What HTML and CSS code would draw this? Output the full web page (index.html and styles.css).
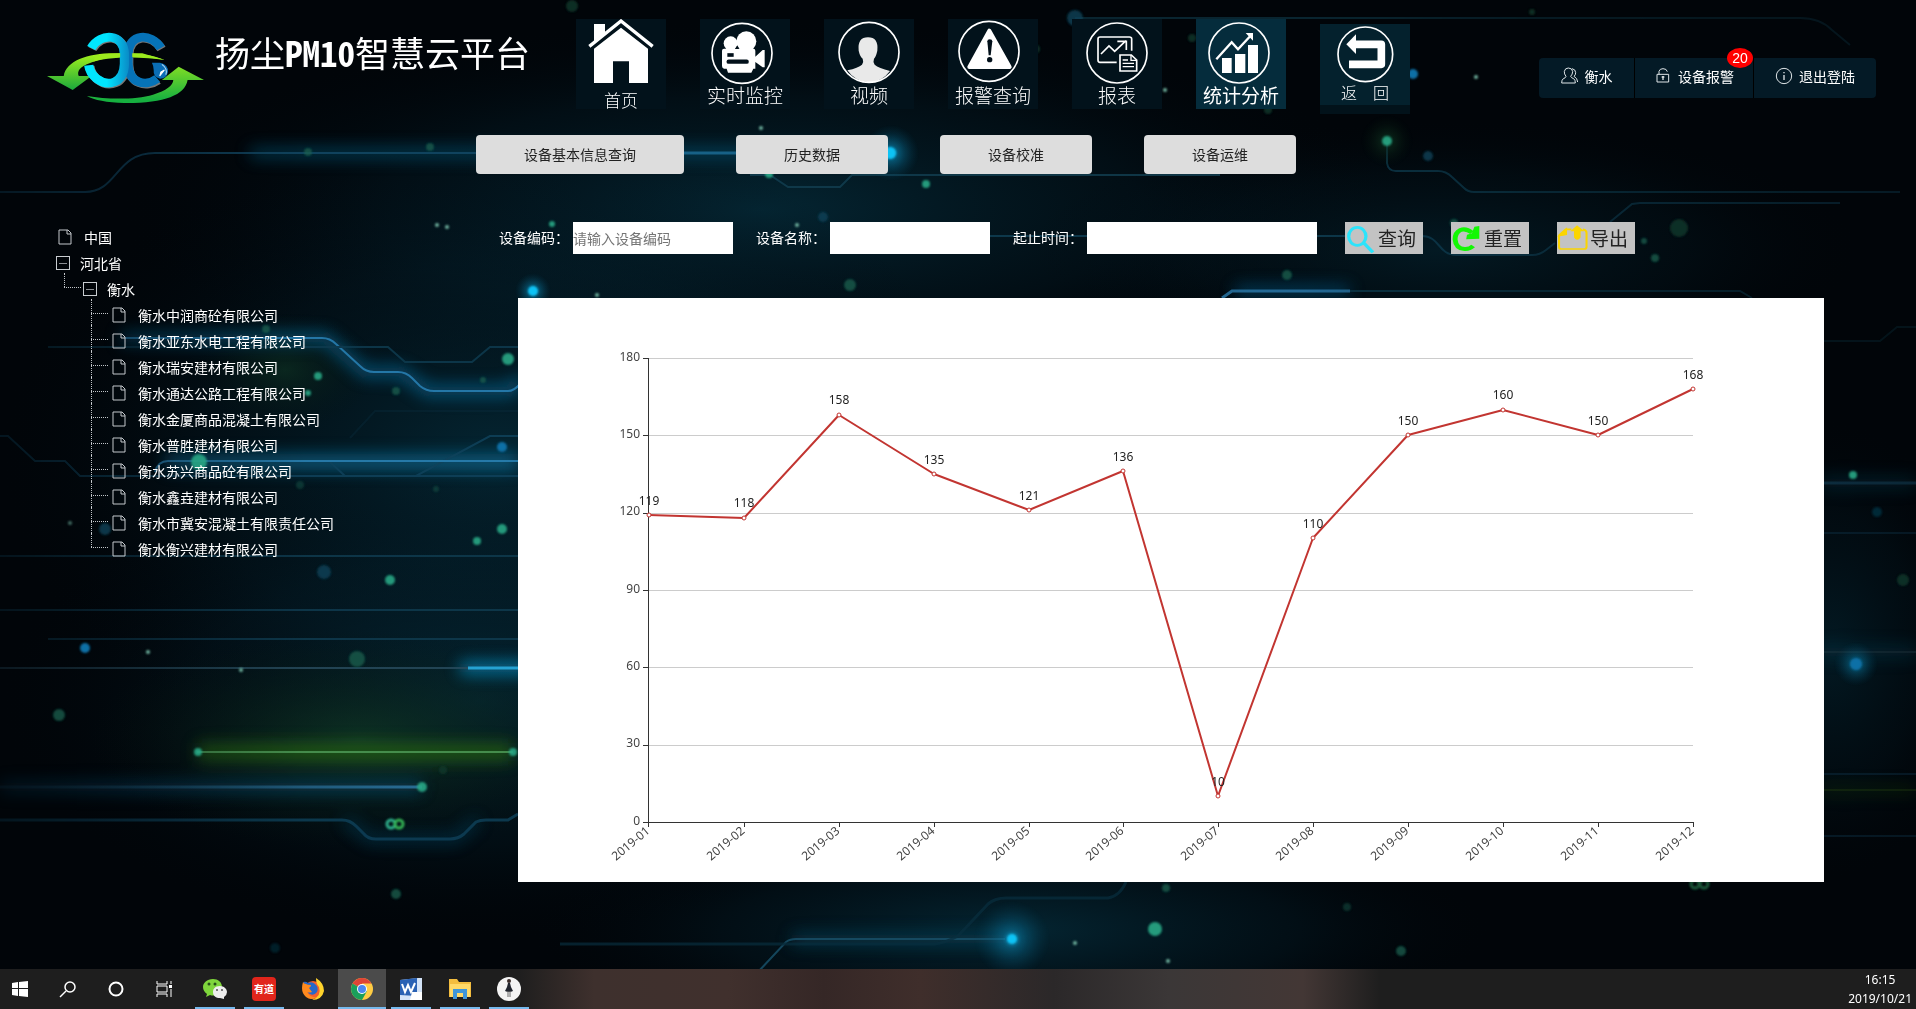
FILE: index.html
```html
<!DOCTYPE html>
<html lang="zh-CN">
<head>
<meta charset="utf-8">
<meta name="viewport" content="width=device-width, initial-scale=1">
<title>扬尘PM10智慧云平台</title>
<link rel="stylesheet" href="styles.css">
</head>
<body>
<svg class="backdrop" viewBox="0 0 1916 1009" preserveAspectRatio="xMidYMid slice" aria-hidden="true">
  <defs>
    <filter id="soft" x="-60" y="-60" width="2040" height="1130" filterUnits="userSpaceOnUse"><feGaussianBlur stdDeviation="8"/></filter>
    <filter id="dotsoft" x="0" y="0" width="1916" height="1009" filterUnits="userSpaceOnUse"><feGaussianBlur stdDeviation="1"/></filter>
    <radialGradient id="teal"><stop offset="0" stop-color="#06384a" stop-opacity=".8"/><stop offset=".6" stop-color="#04222f" stop-opacity=".4"/><stop offset="1" stop-color="#01060c" stop-opacity="0"/></radialGradient>
    <radialGradient id="moss"><stop offset="0" stop-color="#123d25" stop-opacity=".7"/><stop offset="1" stop-color="#06140e" stop-opacity="0"/></radialGradient>
    <radialGradient id="halo"><stop offset="0" stop-color="#12b4e6"/><stop offset=".25" stop-color="#0b7fa9" stop-opacity=".6"/><stop offset="1" stop-color="#05425a" stop-opacity="0"/></radialGradient>
    <linearGradient id="fadeL" gradientUnits="userSpaceOnUse" x1="0" y1="0" x2="518" y2="0"><stop offset="0" stop-color="#12445c" stop-opacity=".6"/><stop offset="1" stop-color="#3a8cc0"/></linearGradient>
    <linearGradient id="edge" gradientUnits="userSpaceOnUse" x1="0" y1="0" x2="1916" y2="0"><stop offset="0" stop-color="#555"/><stop offset=".16" stop-color="#fff"/><stop offset=".68" stop-color="#fff"/><stop offset=".8" stop-color="#aaa"/><stop offset="1" stop-color="#777"/></linearGradient>
    <mask id="edges" maskUnits="userSpaceOnUse" x="0" y="0" width="1916" height="1009"><rect width="1916" height="1009" fill="url(#edge)"/></mask>
  </defs>
  <rect width="1916" height="1009" fill="#010509"/>
  <ellipse cx="760" cy="210" rx="640" ry="190" fill="url(#teal)" opacity=".8"/>
  <ellipse cx="500" cy="460" rx="500" ry="330" fill="url(#teal)" opacity=".8"/>
  <ellipse cx="480" cy="700" rx="480" ry="240" fill="url(#teal)" opacity=".7"/>
  <ellipse cx="1010" cy="930" rx="480" ry="110" fill="url(#teal)" opacity=".8"/>
  <ellipse cx="1440" cy="250" rx="420" ry="130" fill="url(#teal)" opacity=".5"/>
  <ellipse cx="1830" cy="650" rx="150" ry="230" fill="url(#teal)" opacity=".5"/>
  <ellipse cx="360" cy="740" rx="270" ry="110" fill="url(#moss)"/>
  <ellipse cx="285" cy="370" rx="90" ry="60" fill="url(#moss)" opacity=".7"/>
  <g mask="url(#edges)">
  <g class="trace-glow" filter="url(#soft)">
    <path d="M250 153H890" stroke="#0b5878" stroke-width="10"/>
    <path d="M120 338H325L365 372H400L428 391H508L522 380" stroke="#0b6a98" stroke-width="12"/>
    <path d="M165 462H518" stroke="#0b6f9c" stroke-width="16"/>
    <path d="M460 668H530" stroke="#0aa0da" stroke-width="12"/>
    <path d="M197 752H513" stroke="#2b6a18" stroke-width="18"/>
    <path d="M0 787H422" stroke="#0a4a6c" stroke-width="12"/>
    <path d="M345 820L370 839H455L478 820" stroke="#0a4560" stroke-width="8"/>
    <path d="M1235 291H1350" stroke="#0a5a86" stroke-width="10"/>
    <path d="M792 939H1012" stroke="#07435a" stroke-width="12"/>
    <path d="M1820 483H1916M1820 652H1916" stroke="#0a4a62" stroke-width="12"/>
    <path d="M1820 790H1916" stroke="#1d4a10" stroke-width="8"/>
  </g>
  <g class="trace">
    <path d="M0 192H85C118 192 115 153 155 153H885" stroke="#134a66" stroke-width="2"/>
    <path d="M684 153H885" stroke="#1c6c94" stroke-width="3"/>
    <path d="M1075 18H1800Q1820 18 1832 30L1850 45" stroke="#0b2c38" stroke-width="2"/>
    <path d="M1387 141V163Q1388 171 1396 171H1438Q1446 171 1452 177L1464 188Q1468 192 1474 192H1900" stroke="#0f3d50" stroke-width="2"/>
    <path d="M890 236H1422C1440 236 1438 255 1456 255H1532Q1540 255 1546 250L1555 243M1610 222L1632 204L1640 203H1840" stroke="#103f54" stroke-width="2"/>
    <path d="M1222 298L1232 291H1350" stroke="#2a77a6" stroke-width="3"/>
    <path d="M1350 291H1740L1752 298" stroke="#0e3a4c" stroke-width="2"/>
    <path d="M750 175H770L788 187H840L852 175H1220" stroke="#123e50" stroke-width="2"/>
    <path d="M125 338H322Q330 338 336 344L360 366Q366 372 374 372H398Q406 372 412 378L420 386Q426 391 434 391H508Q514 391 520 384" stroke="#2a83b8" stroke-width="2"/>
    <path d="M48 347H388L405 362H472L490 347H518" stroke="#0f3c50" stroke-width="2"/>
    <path d="M0 436H8L35 461H65L80 476H518M300 476H416L490 436H518M330 462L345 476" stroke="#10435c" stroke-width="2"/>
    <path d="M155 472Q158 461 168 461H518" stroke="#2c83b6" stroke-width="2"/>
    <path d="M350 438L375 411H518" stroke="#0a2c3b" stroke-width="2" opacity=".5"/>
    <path d="M0 556H518M0 610H518M48 639H518" stroke="#103c50" stroke-width="2"/>
    <path d="M0 668H518" stroke="#294c5e" stroke-width="2"/>
    <path d="M468 668H518" stroke="#2bb2e6" stroke-width="3"/>
    <path d="M197 752H513" stroke="#4f9a55" stroke-width="2"/>
    <path d="M0 787H422" stroke="url(#fadeL)" stroke-width="3"/>
    <path d="M0 820H342Q350 820 356 826L364 834Q368 839 376 839H450Q458 839 464 834L476 822Q480 820 486 820H508L518 814" stroke="#0f4058" stroke-width="3"/>
    <path d="M758 972L786 942Q790 939 796 939H1005" stroke="#185068" stroke-width="2"/>
    <path d="M560 944H935Q945 943 958 936L988 904Q995 898 1006 898H1108Q1120 896 1126 882" stroke="#0a3040" stroke-width="3" opacity=".8"/>
    <path d="M1820 341H1880L1897 327H1916" stroke="#0a2a35" stroke-width="2"/>
    <path d="M1820 483H1916" stroke="#1c5878" stroke-width="3"/>
    <path d="M1820 533H1916M1820 774H1916M1820 836H1916" stroke="#0f3348" stroke-width="2"/>
    <path d="M1820 652H1916" stroke="#24414f" stroke-width="2"/>
    <path d="M1820 790H1916" stroke="#24420f" stroke-width="2"/>
  </g>
  </g>
  <circle cx="891" cy="153" r="28" fill="url(#halo)"/>
  <circle cx="1012" cy="939" r="38" fill="url(#halo)" opacity=".8"/>
  <circle cx="533" cy="291" r="18" fill="url(#halo)"/>
  <circle cx="1856" cy="664" r="22" fill="url(#halo)" opacity=".8"/>
  <circle cx="1387" cy="141" r="26" fill="url(#moss)"/>
  <g filter="url(#dotsoft)">
    <g fill="#0ec3f5"><circle cx="890" cy="153" r="6"/><circle cx="1012" cy="939" r="5"/><circle cx="533" cy="291" r="5"/></g>
    <g fill="#0f6fa6"><circle cx="1413" cy="74" r="5"/><circle cx="1856" cy="664" r="6"/><circle cx="85" cy="648" r="5"/><circle cx="502" cy="447" r="5"/></g>
    <g fill="#0b4358" opacity=".8"><circle cx="1075" cy="18" r="8"/><circle cx="324" cy="572" r="7"/><circle cx="105" cy="529" r="6"/><circle cx="823" cy="217" r="5"/><circle cx="1428" cy="156" r="5"/><circle cx="1877" cy="512" r="5" opacity=".7"/><circle cx="275" cy="948" r="5" opacity=".5"/></g>
    <g fill="#27a886" opacity=".9"><circle cx="199" cy="462" r="8"/><circle cx="508" cy="359" r="6"/><circle cx="502" cy="529" r="5"/><circle cx="477" cy="541" r="4"/><circle cx="390" cy="580" r="5"/><circle cx="318" cy="376" r="4"/><circle cx="308" cy="393" r="3"/><circle cx="422" cy="787" r="5"/><circle cx="513" cy="752" r="4"/><circle cx="198" cy="752" r="4"/><circle cx="1387" cy="141" r="5"/><circle cx="926" cy="184" r="4"/><circle cx="552" cy="224" r="3"/><circle cx="769" cy="174" r="4"/><circle cx="1155" cy="929" r="7"/><circle cx="1853" cy="475" r="4"/></g>
    <g fill="#176150" opacity=".75"><circle cx="357" cy="659" r="8"/><circle cx="59" cy="715" r="6"/><circle cx="396" cy="894" r="5"/><circle cx="396" cy="391" r="4"/><circle cx="483" cy="380" r="3"/><circle cx="266" cy="329" r="4"/><circle cx="300" cy="485" r="4" opacity=".6"/><circle cx="436" cy="489" r="3" opacity=".6"/><circle cx="850" cy="285" r="6"/><circle cx="1287" cy="275" r="5"/><circle cx="1454" cy="223" r="4"/><circle cx="308" cy="152" r="4"/><circle cx="430" cy="147" r="4"/><circle cx="1401" cy="951" r="5"/><circle cx="1347" cy="907" r="4" opacity=".6"/><circle cx="1166" cy="888" r="4"/><circle cx="1655" cy="258" r="4"/><circle cx="1644" cy="241" r="3"/></g>
    <g fill="#12382a" opacity=".8"><circle cx="1679" cy="228" r="9"/><circle cx="1903" cy="580" r="6"/><circle cx="1192" cy="38" r="4"/><circle cx="1036" cy="49" r="4"/><circle cx="1268" cy="110" r="4"/><circle cx="443" cy="770" r="4"/><circle cx="572" cy="6" r="6"/><circle cx="1532" cy="12" r="3"/></g>
    <g fill="#6fb3a0"><circle cx="437" cy="225" r="2"/><circle cx="447" cy="227" r="2"/><circle cx="761" cy="128" r="2"/><circle cx="797" cy="225" r="2"/><circle cx="1476" cy="77" r="2"/><circle cx="148" cy="652" r="2"/><circle cx="241" cy="670" r="2"/><circle cx="70" cy="523" r="2" opacity=".6"/><circle cx="1075" cy="943" r="2"/><circle cx="1168" cy="961" r="2"/><circle cx="597" cy="295" r="2"/><circle cx="1165" cy="90" r="2"/></g>
    <g fill="none" stroke="#2fb08c" stroke-width="3"><circle cx="391" cy="824" r="4"/><circle cx="399" cy="824" r="4" stroke="#35b455"/></g>
    <g fill="none" stroke="#1c5a3a" stroke-width="3"><circle cx="1695" cy="884" r="4"/><circle cx="1704" cy="884" r="4"/></g>
  </g>
</svg>

<header class="topbar">
  <svg class="logo" viewBox="133 96 440 216" preserveAspectRatio="none" aria-label="logo">
    <defs>
      <linearGradient id="gl" x1="0" y1="0" x2="0" y2="1"><stop offset="0" stop-color="#a4f21c"/><stop offset="1" stop-color="#1aa83c"/></linearGradient>
      <linearGradient id="gr" gradientUnits="userSpaceOnUse" x1="0" y1="200" x2="0" y2="300"><stop offset="0" stop-color="#7fdc25"/><stop offset="1" stop-color="#16b040"/></linearGradient>
      <linearGradient id="cy" gradientUnits="userSpaceOnUse" x1="300" y1="0" x2="366" y2="0"><stop offset="0" stop-color="#00e6ff"/><stop offset="1" stop-color="#0a86c4"/></linearGradient>
    </defs>
    <path d="M133 228H180C186 182 250 158 330 160C390 160 430 165 462 180C400 170 300 168 252 190C226 200 216 214 222 228H258L205 270Z" fill="url(#gl)"/>
    <g fill="none" stroke-width="26">
      <path d="M257 144C284 96 348 100 350 162V192C348 250 304 262 272 236C258 224 252 212 250 196" stroke="#777" transform="translate(3 3)"/>
      <path d="M452 144C424 96 362 100 360 162V192C362 250 410 262 442 238" stroke="#777" transform="translate(2 3)"/>
      <path d="M452 144C424 96 362 100 360 162V192C362 250 410 262 442 236" stroke="#0673b8"/>
      <path d="M257 144C284 96 348 100 350 162V192C348 250 304 262 272 236C258 224 252 212 250 196" stroke="url(#cy)"/>
    </g>
    <path d="M372 160H400L462 179Q420 170 372 171ZM270 167Q300 161 338 160V171Q300 172 262 185Z" fill="#9cea1e"/>
    <path d="M245 288C300 298 380 300 430 284C468 272 486 256 487 240H455L502 200L573 240H527C520 286 460 310 350 309C300 308 265 300 245 288Z" fill="url(#gr)"/>
    <path d="M427 188H450Q474 194 472 216Q468 236 450 236Q430 232 432 210Q432 198 427 188Z" fill="#0a6db5"/>
    <path d="M455 193Q472 206 466 224" fill="none" stroke="#b7dcf2" stroke-width="3"/>
    <path d="M462 210L449 228L452 216Z" fill="#fff" stroke="#fff" stroke-width="3"/>
  </svg>
  <h1 class="brand">扬尘<span class="brand-latin">PM10</span>智慧云平台</h1>
  <nav class="main-nav" aria-label="主导航">
    <a class="tile tile-home" href="#">
      <svg viewBox="48 57 270 198" aria-hidden="true"><path d="M102 249V146L183 83L264 146V249H207V184H159V249Z" fill="#fff"/><path d="M102 124V72H135V98Z" fill="#fff"/><path d="M88 139L183 63L278 139" fill="none" stroke="#fff" stroke-width="10"/></svg>
      <span>首页</span></a>
    <a class="tile" href="#">
      <svg viewBox="420 57 270 198" aria-hidden="true"><circle cx="546" cy="160" r="90" fill="none" stroke="#fff" stroke-width="5"/><g fill="#fff"><circle cx="512" cy="130" r="21"/><circle cx="559" cy="124" r="30"/><path d="M492 146H580Q586 146 586 152V170L608 150H614V202H608L586 186V206H580L574 218H504L500 206H492Q486 204 486 198V152Q486 146 492 146Z"/></g><path d="M502 165H521" stroke="#02101a" stroke-width="11"/><path d="M506 185H560" stroke="#02101a" stroke-width="13" stroke-linecap="round"/><path d="M531 137L537 147H525Z" fill="#02101a"/></svg>
      <span>实时监控</span></a>
    <a class="tile" href="#">
      <svg viewBox="792 57 270 198" aria-hidden="true"><path d="M862 211Q895 204 906 194Q912 186 908 176Q900 170 896 152Q892 112 924 112Q956 112 952 152Q948 170 942 176Q938 186 944 194Q956 204 990 213Q965 247 927 247Q886 246 862 211Z" fill="#e9e9e9"/><circle cx="927" cy="157" r="90" fill="none" stroke="#fff" stroke-width="5"/></svg>
      <span>视频</span></a>
    <a class="tile" href="#">
      <svg viewBox="1164 57 270 198" aria-hidden="true"><circle cx="1287" cy="154" r="90" fill="none" stroke="#fff" stroke-width="5"/><path d="M1288 92L1349 201H1228Z" fill="#fff" stroke="#fff" stroke-width="12" stroke-linejoin="round"/><path d="M1282 124Q1282 118 1289 118Q1297 118 1297 124L1292 166H1286Z" fill="#02101a"/><circle cx="1289" cy="179" r="8" fill="#02101a"/></svg>
      <span>报警查询</span></a>
    <a class="tile" href="#">
      <svg viewBox="216 57 270 198" aria-hidden="true"><g fill="none" stroke="#fff" stroke-width="5"><circle cx="351" cy="159" r="90"/><path d="M350 187H300Q294 187 294 181V117Q294 111 300 111H388Q395 111 395 117V152"/><path d="M303 162L327 138L344 154L378 122M352 124H379V150"/><path d="M360 165H394L410 180V213H360Z"/><path d="M393 165V181H410M368 180H384M368 190H402M368 200H402" stroke-width="4"/></g></svg>
      <span>报表</span></a>
    <a class="tile tile-active" href="#" aria-current="page">
      <svg viewBox="585 57 270 198" aria-hidden="true"><circle cx="714" cy="159" r="90" fill="none" stroke="#fff" stroke-width="5"/><g fill="#fff"><path d="M663 174H692V219H663ZM702 162H733V219H702ZM741 135H771V219H741Z"/><path d="M734 99H756V122Z"/></g><path d="M646 178L692 127L711 148L748 108" fill="none" stroke="#fff" stroke-width="7"/></svg>
      <span>统计分析</span></a>
    <a class="tile tile-back" href="#">
      <svg viewBox="957 72 270 198" aria-hidden="true"><circle cx="1093" cy="163" r="82" fill="none" stroke="#fff" stroke-width="5"/><path d="M1056 133H1141V193H1044" fill="none" stroke="#fff" stroke-width="23" stroke-linejoin="round"/><path d="M1036 133L1065 103V162Z" fill="#fff"/></svg>
      <span>返　回</span></a>
  </nav>
  <nav class="user-bar" aria-label="账户">
    <a class="user-item user-name" href="#"><svg viewBox="325 203 54 54" aria-hidden="true"><path d="M340 231Q334 224 335 216Q337 206 347 206Q358 206 360 216Q360 225 354 231Q356 236 363 238Q368 241 368 251H327Q327 241 332 238Q339 236 340 231ZM358 208Q369 210 369 220Q369 227 364 231Q374 236 375 248"/></svg>衡水</a>
    <a class="user-item user-alarm" href="#"><svg viewBox="609 203 54 54" aria-hidden="true"><path d="M618 225H653V248H618ZM624 225V216Q626 208 636 208Q647 208 649 217"/><path d="M636 230V242M632 233H640" stroke-width="4"/></svg>设备报警<span class="badge">20</span></a>
    <a class="user-item user-exit" href="#"><svg viewBox="978 201 54 54" aria-hidden="true"><circle cx="1005" cy="228" r="23"/><path d="M1005 225V240M1005 216V220" stroke-width="4"/></svg>退出登陆</a>
  </nav>
</header>

<div class="tabs">
  <button class="tab tab-wide" type="button">设备基本信息查询</button>
  <button class="tab" type="button">历史数据</button>
  <button class="tab" type="button">设备校准</button>
  <button class="tab" type="button">设备运维</button>
</div>

<svg class="symbols" aria-hidden="true">
  <symbol id="file" viewBox="0 0 14 16"><path d="M1 1H10L13 4V15H1ZM9 1V5H13" fill="none" stroke="#c4c8cc"/></symbol>
</svg>

<main class="page">
  <aside class="sidebar">
    <ul class="tree">
      <li><a class="leaf" href="#"><svg><use href="#file"/></svg>中国</a></li>
      <li><a class="node" href="#"><i class="minus"></i>河北省</a>
        <ul>
          <li><a class="node" href="#"><i class="minus"></i>衡水</a>
            <ul>
              <li><a class="leaf" href="#"><svg><use href="#file"/></svg>衡水中润商砼有限公司</a></li>
              <li><a class="leaf" href="#"><svg><use href="#file"/></svg>衡水亚东水电工程有限公司</a></li>
              <li><a class="leaf" href="#"><svg><use href="#file"/></svg>衡水瑞安建材有限公司</a></li>
              <li><a class="leaf" href="#"><svg><use href="#file"/></svg>衡水通达公路工程有限公司</a></li>
              <li><a class="leaf" href="#"><svg><use href="#file"/></svg>衡水金厦商品混凝土有限公司</a></li>
              <li><a class="leaf" href="#"><svg><use href="#file"/></svg>衡水普胜建材有限公司</a></li>
              <li><a class="leaf" href="#"><svg><use href="#file"/></svg>衡水苏兴商品砼有限公司</a></li>
              <li><a class="leaf" href="#"><svg><use href="#file"/></svg>衡水鑫垚建材有限公司</a></li>
              <li><a class="leaf" href="#"><svg><use href="#file"/></svg>衡水市冀安混凝土有限责任公司</a></li>
              <li><a class="leaf" href="#"><svg><use href="#file"/></svg>衡水衡兴建材有限公司</a></li>
            </ul>
          </li>
        </ul>
      </li>
    </ul>
  </aside>

  <section class="content">
    <form class="filters">
      <div class="field"><label for="code">设备编码：</label><input id="code" type="text" placeholder="请输入设备编码"></div>
      <div class="field"><label for="name">设备名称：</label><input id="name" type="text"></div>
      <div class="field"><label for="range">起止时间：</label><input id="range" class="input-wide" type="text"></div>
      <div class="actions">
        <button class="action" type="button"><svg viewBox="674 66 78 96" preserveAspectRatio="none" aria-hidden="true"><ellipse cx="704" cy="109" rx="21" ry="27" fill="none" stroke="#2be4fb" stroke-width="8"/><path d="M719 128L742 157" stroke="#2be4fb" stroke-width="9"/></svg>查询</button>
        <button class="action" type="button"><svg viewBox="933 66 78 96" preserveAspectRatio="none" aria-hidden="true"><path d="M984 98Q970 84 956 90Q943 98 943 118Q945 146 966 147Q978 148 987 138" fill="none" stroke="#13f704" stroke-width="12"/><path d="M1002 78V116L970 118L972 104L984 100L990 80Z" fill="#13f704"/></svg>重置</button>
        <button class="action" type="button"><svg viewBox="1193 66 78 96" preserveAspectRatio="none" aria-hidden="true"><path d="M1228 88H1214L1198 106V140Q1198 147 1204 147H1259Q1265 147 1265 140V98Q1265 90 1256 88" fill="none" stroke="#fbd500" stroke-width="5"/><path d="M1197 108L1216 86V104ZM1242 78L1256 92H1249V112Q1242 124 1236 112V92H1229Z" fill="#fbd500" stroke="#fbd500" stroke-width="3"/></svg>导出</button>
      </div>
    </form>

    <figure class="chart">
      <svg viewBox="0 0 1306 584" role="img" aria-label="月度统计折线图">
        <path class="split" d="M131 60H1175M131 137H1175M131 215H1175M131 292H1175M131 369H1175M131 447H1175"/>
        <path class="axis" d="M130 60V524M125 524H1175M125 60H130M125 137H130M125 215H130M125 292H130M125 369H130M125 447H130M130 524V529M226 524V529M321 524V529M416 524V529M511 524V529M605 524V529M700 524V529M795 524V529M890 524V529M985 524V529M1080 524V529M1175 524V529"/>
        <g class="y-labels"><text x="122" y="63">180</text><text x="122" y="140">150</text><text x="122" y="217">120</text><text x="122" y="295">90</text><text x="122" y="372">60</text><text x="122" y="449">30</text><text x="122" y="527">0</text></g>
        <g class="x-labels">
          <text transform="translate(130 531) rotate(-40)" y="4">2019-01</text><text transform="translate(225 531) rotate(-40)" y="4">2019-02</text><text transform="translate(320 531) rotate(-40)" y="4">2019-03</text><text transform="translate(415 531) rotate(-40)" y="4">2019-04</text><text transform="translate(510 531) rotate(-40)" y="4">2019-05</text><text transform="translate(604 531) rotate(-40)" y="4">2019-06</text><text transform="translate(699 531) rotate(-40)" y="4">2019-07</text><text transform="translate(794 531) rotate(-40)" y="4">2019-08</text><text transform="translate(889 531) rotate(-40)" y="4">2019-09</text><text transform="translate(984 531) rotate(-40)" y="4">2019-10</text><text transform="translate(1079 531) rotate(-40)" y="4">2019-11</text><text transform="translate(1174 531) rotate(-40)" y="4">2019-12</text>
        </g>
        <polyline class="series" points="131,217 226,220 321,117 416,176 511,212 605,173 700,498 795,240 890,137 985,112 1080,137 1175,91"/>
        <g class="points"><circle cx="131" cy="217" r="2"/><circle cx="226" cy="220" r="2"/><circle cx="321" cy="117" r="2"/><circle cx="416" cy="176" r="2"/><circle cx="511" cy="212" r="2"/><circle cx="605" cy="173" r="2"/><circle cx="700" cy="498" r="2"/><circle cx="795" cy="240" r="2"/><circle cx="890" cy="137" r="2"/><circle cx="985" cy="112" r="2"/><circle cx="1080" cy="137" r="2"/><circle cx="1175" cy="91" r="2"/></g>
        <g class="values"><text x="131" y="207">119</text><text x="226" y="209">118</text><text x="321" y="106">158</text><text x="416" y="166">135</text><text x="511" y="202">121</text><text x="605" y="163">136</text><text x="700" y="488">10</text><text x="795" y="230">110</text><text x="890" y="127">150</text><text x="985" y="101">160</text><text x="1080" y="127">150</text><text x="1175" y="81">168</text></g>
      </svg>
    </figure>
  </section>
</main>

<footer class="taskbar">
  <button class="task task-start" type="button" aria-label="开始"><svg width="16" height="16" viewBox="0 0 16 16"><path d="M0 2L6 1V7H0ZM7 1L16 0V7H7ZM0 8H6V15L0 14ZM7 8H16V16L7 15Z" fill="#fff"/></svg></button>
  <button class="task" type="button" aria-label="搜索"><svg width="18" height="18" viewBox="0 0 18 18"><circle cx="11" cy="7" r="5" fill="none" stroke="#fff" stroke-width="1.5"/><path d="M7 11L1 17" stroke="#fff" stroke-width="1.5"/></svg></button>
  <button class="task" type="button" aria-label="Cortana"><svg width="16" height="16" viewBox="0 0 16 16"><circle cx="8" cy="8" r="6.500" fill="none" stroke="#fff" stroke-width="2"/></svg></button>
  <button class="task" type="button" aria-label="任务视图"><svg width="16" height="16" viewBox="0 0 16 16"><path d="M1 0V3H11V0M1 16V13H11V16M1 5H11V11H1ZM15 0V3M15 8V16" fill="none" stroke="#fff"/><path d="M13 4H16V7H13Z" fill="#fff"/></svg></button>
  <div class="apps">
    <button class="task running" type="button" aria-label="微信"><svg width="24" height="24" viewBox="0 0 24 24"><path d="M10 2C4 2 0 6 0 10Q0 14 4 17L3 20L7 18Q10 19 13 18Q18 16 19 10C19 5 15 2 10 2Z" fill="#7fd63c"/><circle cx="6" cy="7" r="1.500" fill="#27501a"/><circle cx="12" cy="7" r="1.500" fill="#27501a"/><path d="M17 9C12 9 10 12 10 15C10 19 13 21 17 21L21 22L21 20Q24 18 24 15C24 12 21 9 17 9Z" fill="#eee"/><circle cx="14" cy="13" r="1" fill="#555"/><circle cx="19" cy="13" r="1" fill="#555"/></svg></button>
    <button class="task running" type="button" aria-label="有道"><span class="youdao">有道</span></button>
    <button class="task" type="button" aria-label="Firefox"><svg width="22" height="22" viewBox="0 0 22 22"><circle cx="11" cy="12" r="9" fill="#f5602a"/><path d="M14 0Q22 5 22 13Q20 22 10 22Q20 18 17 9Q14 6 14 0Z" fill="#ffd42c"/><path d="M1 4Q4 3 6 5Q10 3 13 6Q17 9 15 14Q12 18 8 16Q4 14 5 10Z" fill="#2668c8"/><path d="M1 4Q-2 14 4 19Q9 23 15 19Q8 20 5 14Q7 15 10 14L7 10Q9 9 9 7Q5 7 4 6Q2 6 1 4Z" fill="#ff8a1e"/></svg></button>
    <button class="task running current" type="button" aria-label="Chrome"><svg width="22" height="22" viewBox="0 0 22 22"><circle cx="11" cy="11" r="11" fill="#fc4"/><path d="M11 11L1.500 5.500A11 11 0 0 1 20.500 5.500H11Z" fill="#de4436"/><path d="M11 11L1.500 5.500A11 11 0 0 0 11 22L16 13Z" fill="#1a9f5b"/><circle cx="11" cy="11" r="5" fill="#fff"/><circle cx="11" cy="11" r="4" fill="#4a87f0"/></svg></button>
    <button class="task running" type="button" aria-label="Word"><svg width="22" height="22" viewBox="0 0 22 22"><path d="M0 2L18 0H22V22H0Z" fill="#d3e3f7"/><path d="M0 2L17 0V18L0 17Z" fill="#2a62b4"/><path d="M2 6L5 14L8 7L11 14L15 5" fill="none" stroke="#fff" stroke-width="2"/><path d="M12 14H22V22H10Z" fill="#fff"/></svg></button>
    <button class="task running" type="button" aria-label="文件资源管理器"><svg width="22" height="20" viewBox="0 0 22 20"><path d="M0 0H8L10 3H22V18H0Z" fill="#f3bd3f"/><path d="M1 5H21V18H1Z" fill="#ffd968"/><path d="M4 10H18V20H14V14H8V20H4Z" fill="#3d95d9"/></svg></button>
    <button class="task running" type="button" aria-label="头像"><svg width="24" height="24" viewBox="0 0 24 24"><circle cx="12" cy="12" r="12" fill="#f4f4f4"/><circle cx="12" cy="4" r="2" fill="#3a2c2a"/><path d="M11 6H13L14 10L16 14Q12 16 8 14L10 10Z" fill="#20242e"/><path d="M11 14V20M13 14V20" stroke="#666"/></svg></button>
  </div>
  <div class="clock"><time>16:15</time><span>2019/10/21</span></div>
</footer>
</body>
</html>
```

FILE: styles.css
```css
* { box-sizing: border-box; }

body {
  margin: 0;
  min-height: 100vh;
  display: flex;
  flex-direction: column;
  background: #010509;
  color: #fff;
  font: 14px/20px "Noto Sans CJK SC", sans-serif;
}

a { color: inherit; text-decoration: none; }
button, input { font: inherit; border: 0; padding: 0; margin: 0; }

.backdrop {
  position: fixed;
  inset: 0;
  z-index: -1;
  width: 100%;
  height: 100%;
}
.trace path, .trace-glow path { fill: none; }
.trace { opacity: .85; }
.trace-glow { opacity: .7; }
.symbols { display: none; }

/* header */
.topbar {
  display: flex;
  align-items: flex-start;
  padding: 19px 40px 0 47px;
}
.logo { flex: none; width: 157px; height: 72px; margin-top: 13px; }
.brand {
  flex: none;
  width: 315px;
  margin: 16px 0 0 11px;
  font-size: 35px;
  line-height: 34px;
  font-weight: 400;
  white-space: nowrap;
}
.brand-latin { font-family: "Noto Sans Mono CJK SC", "Noto Sans CJK SC", monospace; font-weight: 700; }

.main-nav { display: flex; gap: 34px; margin-left: 46px; }
.tile {
  display: flex;
  flex-direction: column;
  align-items: center;
  width: 90px;
  height: 90px;
  background: #02121b;
  font-size: 19px;
  font-weight: 300;
}
.tile svg { flex: none; display: block; width: 90px; height: 66px; }
.tile span { white-space: nowrap; }
.tile-home { font-size: 17px; }
.tile-home span { margin-top: 5px; }
.tile-active { background: #052c3c; font-weight: 400; }
.tile-back {
  margin-top: 5px;
  background: linear-gradient(#04212d 81px, #02121a 81px);
  font-size: 16px;
}
.tile-back span { margin-top: -8px; }

.user-bar { display: flex; margin: 39px 0 0 auto; }
.user-item {
  position: relative;
  display: flex;
  align-items: center;
  justify-content: center;
  gap: 6px;
  height: 40px;
  padding-bottom: 4px;
  background: #041a26;
}
.user-item svg { width: 18px; height: 18px; fill: none; stroke: #dfe5e8; stroke-width: 3; }
.user-item + .user-item { border-left: 1px solid #000; }
.user-name { width: 95px; border-radius: 4px 0 0 4px; }
.user-alarm { width: 119px; }
.user-exit { width: 123px; border-radius: 0 4px 4px 0; }
.badge {
  position: absolute;
  top: -10px;
  right: 0;
  width: 26px;
  height: 20px;
  border-radius: 50%;
  background: #f00;
  font: 14px/20px "Liberation Sans", sans-serif;
  text-align: center;
}

/* section buttons */
.tabs { display: flex; gap: 52px; margin: 21px 0 0 476px; }
.tab {
  width: 152px;
  height: 39px;
  padding-bottom: 2px;
  border-radius: 4px;
  background: #ddd;
  color: #222;
}
.tab-wide { width: 208px; }

/* body */
.page { display: flex; flex: 1; padding: 48px 92px 0 56px; }
.sidebar { flex: none; width: 443px; }

.tree, .tree ul { list-style: none; margin: 0; padding: 0; }
.tree { padding-top: 2px; }
.tree ul { padding-left: 27px; }
.tree li { position: relative; }
.node, .leaf { display: flex; align-items: center; height: 26px; gap: 10px; }
.leaf { gap: 12px; padding-left: 2px; }
.leaf svg { width: 14px; height: 16px; }
.minus {
  display: flex;
  align-items: center;
  justify-content: center;
  width: 14px;
  height: 14px;
  border: 1px solid #c8ccd0;
}
.minus::before { content: ""; width: 8px; height: 1px; background: #8b8f93; }
.tree ul > li::before {
  content: "";
  position: absolute;
  left: -19px;
  top: 11px;
  width: 17px;
  border-top: 1px dotted #c0c4c8;
}
.tree ul > li::after {
  content: "";
  position: absolute;
  left: -19px;
  top: -3px;
  height: 26px;
  border-left: 1px dotted #c0c4c8;
}
.tree ul > li:last-child::after { height: 14px; }

.content { flex: 1; min-width: 0; }
.filters { display: flex; gap: 23px; }
.field { display: flex; align-items: center; gap: 4px; }
.field label { white-space: nowrap; padding-bottom: 2px; }
.field input { width: 160px; height: 32px; background: #fff; color: #222; }
.field input::placeholder { color: #757575; opacity: 1; }
.field .input-wide { width: 230px; }
.actions { display: flex; gap: 28px; margin-left: 5px; }
.action {
  display: flex;
  align-items: center;
  gap: 1px;
  width: 78px;
  height: 32px;
  background: #c3c3c3;
  color: #222;
  font-size: 19px;
  white-space: nowrap;
}
.action svg { width: 32px; height: 32px; }

.chart { margin: 44px 0 0 19px; background: #fff; }
.chart svg { display: block; width: 100%; height: auto; }
.chart text { font: 12px "Noto Sans", sans-serif; fill: #444; }
.split, .axis { fill: none; stroke: #ccc; shape-rendering: crispEdges; }
.axis { stroke: #333; }
.y-labels text, .x-labels text { text-anchor: end; }
.chart .values text { text-anchor: middle; fill: #222; }
.series { fill: none; stroke: #c23531; stroke-width: 2; stroke-linejoin: bevel; }
.points circle { fill: #fff; stroke: #c23531; }

/* taskbar */
.taskbar {
  display: flex;
  height: 40px;
  background: linear-gradient(90deg, #1e1e1e 27%, #3e302d 31%, #40302d 38%, #352726 43%, #3f2e2b 48%, #2b2829 55%, #3b3737 61%, #433735 68%, #1e1e1e 72%);
}
.task {
  display: flex;
  align-items: center;
  justify-content: center;
  width: 48px;
  height: 40px;
  background: none;
}
.task-start { width: 44px; padding-right: 4px; }
.apps { display: flex; gap: 1px; margin-left: 3px; }
.running {
  background: linear-gradient(#76b9ed, #76b9ed) center bottom / 40px 2px no-repeat;
}
.current { background-color: #4b4b4b; background-size: 48px 2px; }
.youdao {
  width: 24px;
  height: 24px;
  border-radius: 4px;
  background: #e1251b;
  color: #fff;
  font-size: 10px;
  font-weight: 700;
  line-height: 24px;
}
.clock {
  display: flex;
  flex-direction: column;
  align-items: center;
  margin: 1px 4px 0 auto;
  font: 12px/19px "Noto Sans", sans-serif;
}
```
